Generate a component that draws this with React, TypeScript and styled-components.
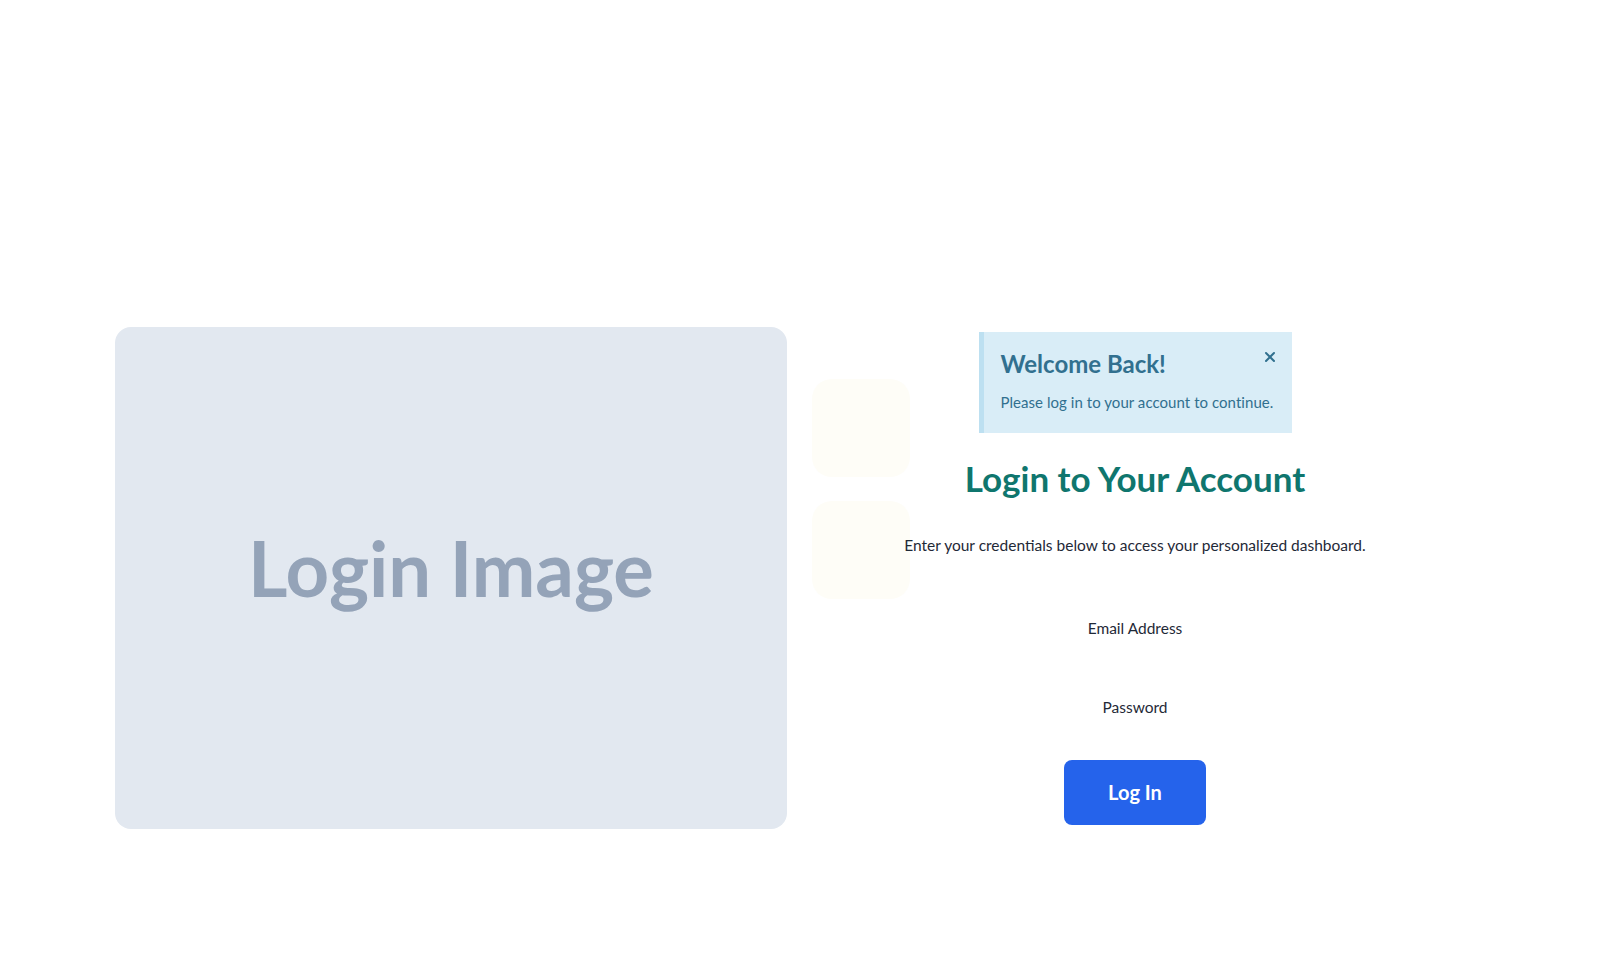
import React from 'react';
import styled, { createGlobalStyle } from 'styled-components';

const GlobalStyle = createGlobalStyle`
  html, body {
    margin: 0;
    padding: 0;
    background: #ffffff;
    font-family: Lato, 'Open Sans', sans-serif;
  }
  * {
    box-sizing: border-box;
  }
`;

const App = () => {
  return (
    <>
      <GlobalStyle />
      <Page>
        <Layout>
          <ImageBox>
            <ImageLabel>Login Image</ImageLabel>
          </ImageBox>
          <FormColumn>
            <Deco $top={47} />
            <Deco $top={169} />
            <Alert>
              <AlertTitle>Welcome Back!</AlertTitle>
              <AlertText>Please log in to your account to continue.</AlertText>
              <CloseBtn aria-label="close">
                <svg width="12" height="12" viewBox="0 0 12 12">
                  <path d="M2 2 L10 10 M10 2 L2 10" stroke="#31708f" strokeWidth="2" strokeLinecap="round" />
                </svg>
              </CloseBtn>
            </Alert>
            <Title>Login to Your Account</Title>
            <Subtitle>Enter your credentials below to access your personalized dashboard.</Subtitle>
            <Form onSubmit={(e) => e.preventDefault()}>
              <Field>
                <Label htmlFor="email">Email Address</Label>
                <Input id="email" type="email" />
              </Field>
              <Field>
                <Label htmlFor="password">Password</Label>
                <Input id="password" type="password" />
              </Field>
              <LoginBtn type="submit">Log In</LoginBtn>
            </Form>
          </FormColumn>
        </Layout>
      </Page>
    </>
  );
};

export default App;

const Page = styled.div`
  width: 100%;
  min-height: 100vh;
  padding: 327px 115px 0;
`;

const Layout = styled.div`
  display: grid;
  grid-template-columns: 672px 646px;
  column-gap: 25px;
  align-items: center;
`;

//왼쪽 이미지
const ImageBox = styled.div`
  height: 502px;
  background-color: #e2e8f0;
  border-radius: 16px;
  display: flex;
  align-items: center;
  justify-content: center;
  padding-bottom: 20px;
`;
const ImageLabel = styled.span`
  font-family: Lato, sans-serif;
  font-weight: 700;
  font-size: 76px;
  line-height: 1.2;
  color: #94a3b8;
`;

//오른쪽 폼
const FormColumn = styled.div`
  position: relative;
  display: flex;
  flex-direction: column;
  align-items: center;
`;
const Deco = styled.div<{ $top: number }>`
  position: absolute;
  left: 0;
  top: ${(p) => p.$top}px;
  width: 98px;
  height: 98px;
  border-radius: 20px;
  background-color: #fefdf7;
`;
const Alert = styled.div`
  position: relative;
  width: 313px;
  height: 101px;
  padding: 16px 16px 0 17px;
  background-color: #d9edf7;
  border-left: 5px solid #bde0f1;
  color: #31708f;
`;
const AlertTitle = styled.h4`
  margin: 0 0 11px;
  font-size: 24px;
  line-height: 32px;
  font-weight: 700;
`;
const AlertText = styled.p`
  margin: 0;
  font-size: 15px;
  line-height: 22px;
  letter-spacing: 0.05px;
`;
const CloseBtn = styled.button`
  position: absolute;
  top: 19px;
  right: 16px;
  width: 12px;
  height: 12px;
  padding: 0;
  border: none;
  background: none;
  display: flex;
  cursor: pointer;
`;
const Title = styled.h2`
  position: relative;
  margin: 23px 0 0;
  font-size: 35px;
  line-height: 44px;
  font-weight: 700;
  color: #0f766e;
`;
const Subtitle = styled.p`
  position: relative;
  margin: 34px 0 0;
  font-size: 15.5px;
  line-height: 22px;
  color: #1f2937;
`;
const Form = styled.form`
  position: relative;
  margin-top: 61px;
  display: flex;
  flex-direction: column;
  align-items: center;
`;
const Field = styled.div`
  display: flex;
  flex-direction: column;
  align-items: center;
  margin-bottom: 15px;
  &:last-of-type {
    margin-bottom: 0;
  }
`;
const Label = styled.label`
  font-size: 15.5px;
  line-height: 22px;
  color: #1f2937;
`;
const Input = styled.input`
  width: 300px;
  height: 42px;
  border: none;
  outline: none;
  background: transparent;
`;
const LoginBtn = styled.button`
  width: 142px;
  height: 65px;
  border: none;
  border-radius: 8px;
  background-color: #2563eb;
  color: #ffffff;
  font-family: Lato, sans-serif;
  font-weight: 700;
  font-size: 20px;
  cursor: pointer;
`;
